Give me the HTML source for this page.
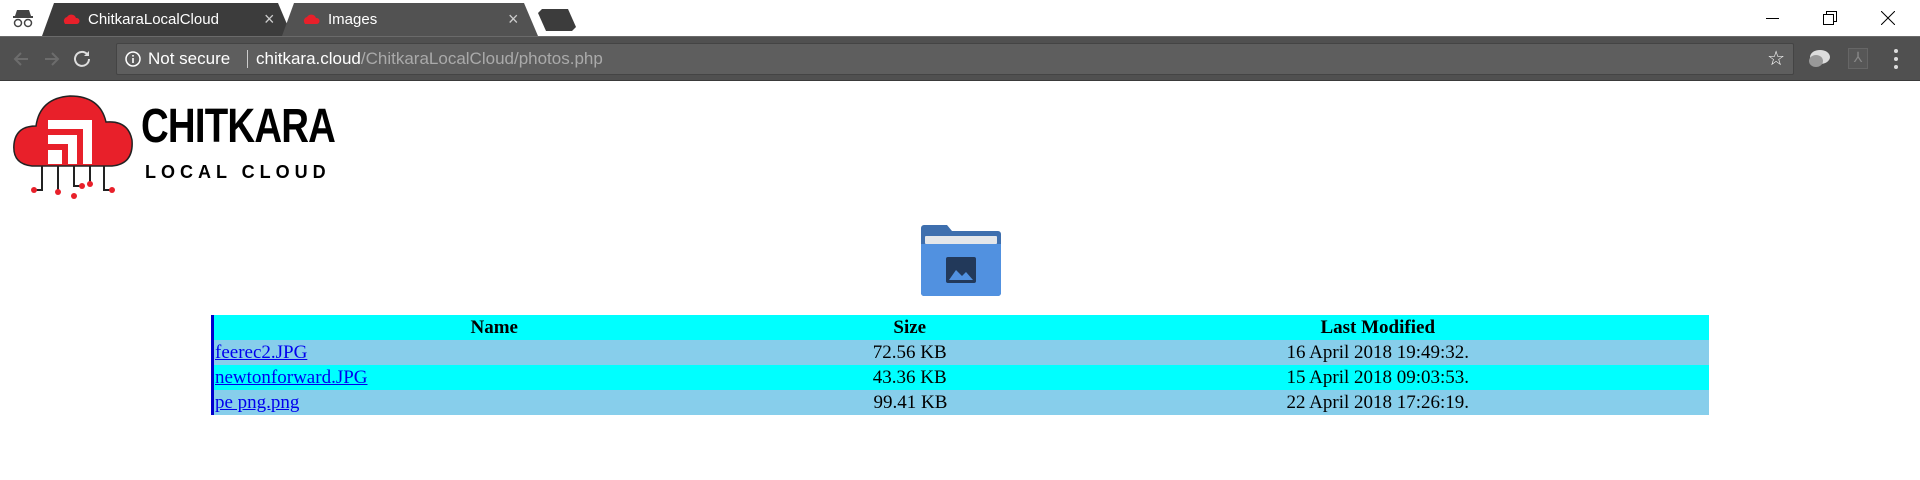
<!DOCTYPE html>
<html><head><meta charset="utf-8"><style>
*{margin:0;padding:0;box-sizing:border-box}
body{width:1920px;height:480px;overflow:hidden;background:#fff;font-family:"Liberation Serif",serif;position:relative}
.tabbar{position:absolute;left:0;top:0;width:1920px;height:36px;background:#fff}
.tab{position:absolute;top:3px;height:33px;color:#fff;font:15px "Liberation Sans",sans-serif;line-height:33px}
.toolbar{position:absolute;left:0;top:36px;width:1920px;height:45px;background:#505050;border-top:1px solid #6a6a6a;border-bottom:1px solid #3a3a3a}
.omni{position:absolute;left:116px;top:6px;width:1678px;height:32px;background:#5e5e5e;border:1px solid #444;border-radius:2px;font:17px "Liberation Sans",sans-serif;color:#fff;line-height:30px}
table{position:absolute;left:211px;top:315px;width:1498px;border-collapse:collapse;border-left:3px solid #0000cc;font-size:19px}
td,th{height:25px;padding:0 1px;line-height:25px}
th{background:#00ffff}
tr.a td{background:#87ceeb}
tr.b td{background:#00ffff}
td:nth-child(2),td:nth-child(3){text-align:center}
a{color:#0000ee}
</style></head><body>
<div class="tabbar">
<svg style="position:absolute;left:12px;top:8px" width="22" height="20" viewBox="0 0 22 20"><path d="M5 2h12l2 6H3z" fill="#444"/><rect x="1" y="8" width="20" height="2" fill="#444"/><circle cx="6" cy="15" r="3.5" fill="none" stroke="#444" stroke-width="1.5"/><circle cx="16" cy="15" r="3.5" fill="none" stroke="#444" stroke-width="1.5"/></svg>
<svg style="position:absolute;left:42px;top:3px" width="250" height="33"><path d="M0 33 L12 0 H236 L250 33Z" fill="#3c3c3c"/></svg>
<div class="tab" style="left:88px">ChitkaraLocalCloud</div>
<div class="tab" style="left:264px;color:#ccc;font-size:18px">×</div>
<svg style="position:absolute;left:282px;top:3px" width="256" height="33"><path d="M0 33 L12 0 H242 L256 33Z" fill="#525252"/></svg>
<div class="tab" style="left:328px">Images</div>
<div class="tab" style="left:508px;color:#ccc;font-size:18px">×</div>
<svg style="position:absolute;left:62px;top:10px" width="18" height="18"><path d="M2 12a4 4 0 0 1 3-5a5 5 0 0 1 9 1a3 3 0 0 1 1 6H3z" fill="#e8202a"/></svg>
<svg style="position:absolute;left:302px;top:10px" width="18" height="18"><path d="M2 12a4 4 0 0 1 3-5a5 5 0 0 1 9 1a3 3 0 0 1 1 6H3z" fill="#e8202a"/></svg>
<svg style="position:absolute;left:538px;top:9px" width="40" height="22"><path d="M0 4 L4 0 H30 L38 18 L34 22 H8Z" fill="#3c3c3c"/></svg>
<div style="position:absolute;left:1766px;top:18px;width:13px;height:1px;background:#000"></div>
<div style="position:absolute;left:1826px;top:11px;width:11px;height:11px;border:1px solid #000"></div>
<div style="position:absolute;left:1823px;top:14px;width:11px;height:11px;border:1px solid #000;background:#fff"></div>
<svg style="position:absolute;left:1881px;top:11px" width="14" height="14"><path d="M0 0L14 14M14 0L0 14" stroke="#000" stroke-width="1"/></svg>
</div>
<div class="toolbar">
<svg style="position:absolute;left:12px;top:12px" width="80" height="20"><path d="M16 10H3M9 4L3 10L9 16" stroke="#6c6c6c" stroke-width="2" fill="none"/><path d="M33 10H46M40 4L46 10L40 16" stroke="#6c6c6c" stroke-width="2" fill="none"/><path d="M77 10a7 7 0 1 1-2-5" stroke="#ddd" stroke-width="2" fill="none"/><path d="M77 2v5h-5z" fill="#ddd"/></svg>
<div class="omni">
<svg style="position:absolute;left:8px;top:7px" width="16" height="16"><circle cx="8" cy="8" r="7" fill="none" stroke="#fff" stroke-width="1.5"/><rect x="7.2" y="7" width="1.6" height="5" fill="#fff"/><rect x="7.2" y="4" width="1.6" height="1.6" fill="#fff"/></svg>
<span style="position:absolute;left:31px">Not secure</span>
<span style="position:absolute;left:130px;top:6px;width:1px;height:18px;background:#ccc"></span>
<span style="position:absolute;left:139px">chitkara.cloud<span style="color:#aaa">/ChitkaraLocalCloud/photos.php</span></span>
<span style="position:absolute;right:8px;top:0;color:#fff;font-size:20px">☆</span>
</div>
<svg style="position:absolute;left:1807px;top:11px" width="24" height="22"><ellipse cx="13" cy="9" rx="10" ry="7" fill="#ddd"/><ellipse cx="9" cy="13" rx="7" ry="6" fill="#999"/></svg>
<div style="position:absolute;left:1848px;top:11px;width:20px;height:21px;border:1px solid #666;background:#575757;color:#888;font:14px sans-serif;text-align:center">⅄</div>
<svg style="position:absolute;left:1893px;top:11px" width="6" height="22"><circle cx="3" cy="3" r="2" fill="#ddd"/><circle cx="3" cy="11" r="2" fill="#ddd"/><circle cx="3" cy="19" r="2" fill="#ddd"/></svg>
</div>
<svg style="position:absolute;left:12px;top:92px" width="125" height="108" viewBox="0 0 125 108">
<path d="M20 74 Q0 72 2 52 Q4 34 24 34 Q28 6 58 4 Q88 4 94 30 Q116 28 120 48 Q122 72 100 74Z" fill="#e8202a" stroke="#222" stroke-width="1.5"/>
<path d="M36 28H80V72H71V37H36Z" fill="#fff"/><path d="M36 43H65V72H56V52H36Z" fill="#fff"/><rect x="36" y="58" width="14" height="14" fill="#fff"/>
<g stroke="#222" stroke-width="2" fill="none"><path d="M30 74V98H22"/><path d="M46 74V98"/><path d="M62 74V94H70"/><path d="M78 74V90"/><path d="M92 74V98H100"/></g>
<g fill="#e8202a"><circle cx="22" cy="98" r="3"/><circle cx="46" cy="100" r="3"/><circle cx="70" cy="94" r="3"/><circle cx="78" cy="92" r="3"/><circle cx="100" cy="98" r="3"/><circle cx="62" cy="104" r="3"/></g>
</svg>
<div style="position:absolute;left:141px;top:100px;font:bold 48px 'Liberation Sans',sans-serif;letter-spacing:-1px;transform:scaleX(0.8);transform-origin:left;line-height:54px;color:#000">CHITKARA</div>
<div style="position:absolute;left:145px;top:162px;font:bold 18px 'Liberation Sans',sans-serif;letter-spacing:5px;color:#000;line-height:20px">LOCAL CLOUD</div>
<svg style="position:absolute;left:921px;top:225px" width="80" height="72" viewBox="0 0 80 72">
<path d="M3 0H26L31 6H77a3 3 0 0 1 3 3V68a3 3 0 0 1-3 3H3a3 3 0 0 1-3-3V3a3 3 0 0 1 3-3Z" fill="#3e6fae"/>
<rect x="4" y="11" width="72" height="8" rx="1" fill="#e3e6ea"/>
<path d="M0 19H80V68a3 3 0 0 1-3 3H3a3 3 0 0 1-3-3Z" fill="#5191e0"/>
<rect x="25" y="32" width="30" height="26" rx="2" fill="#22395a"/>
<path d="M28 55L35 45L41 51L45 47L52 55Z" fill="#5191e0"/>
</svg>
<table>
<tr><th style="width:562px">Name</th><th style="width:272px">Size</th><th>Last Modified</th></tr>
<tr class="a"><td><a href="#">feerec2.JPG</a></td><td>72.56 KB</td><td>16 April 2018 19:49:32.</td></tr>
<tr class="b"><td><a href="#">newtonforward.JPG</a></td><td>43.36 KB</td><td>15 April 2018 09:03:53.</td></tr>
<tr class="a"><td><a href="#">pe png.png</a></td><td>99.41 KB</td><td>22 April 2018 17:26:19.</td></tr>
</table>
</body></html>
